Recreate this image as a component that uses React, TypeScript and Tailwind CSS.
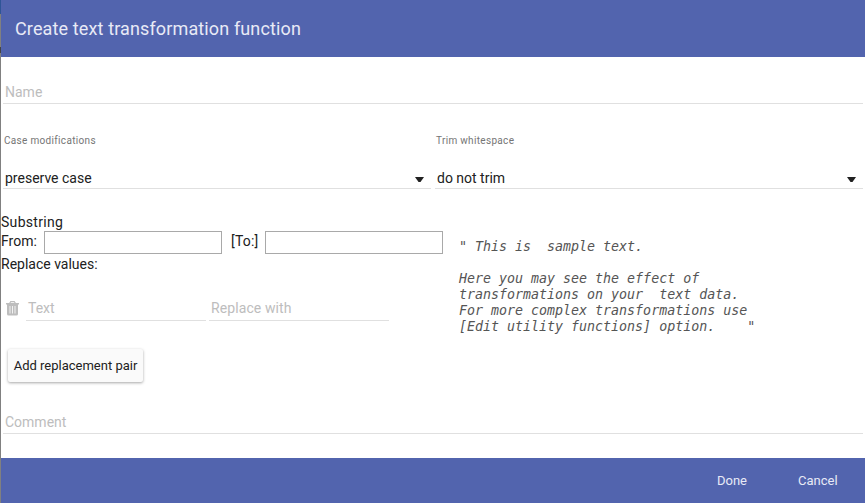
import React from 'react';

function Field({ label, className = '' }: { label: string; className?: string }) {
  return (
    <div className={`border-b border-[#e0e0e0] text-sm text-[#bdbdbd] ${className}`}>
      <span>{label}</span>
    </div>
  );
}

function Select({ label, value, className = '' }: { label: string; value: string; className?: string }) {
  return (
    <div className={className}>
      <div className="pl-[1px] text-[10px] leading-4 tracking-[0.32px] text-[#757575]">{label}</div>
      <div className="mt-[18px] flex h-[22px] items-center justify-between border-b border-[#e0e0e0] pt-px pr-[7px] pl-[2px] text-sm text-[#212121]">
        <span>{value}</span>
        <svg width="9" height="6" viewBox="0 0 9 6" className="mt-[3px]" aria-hidden="true">
          <path d="M0 0H9L5.5 5H3.5Z" fill="#212121" />
        </svg>
      </div>
    </div>
  );
}

function TrashIcon() {
  return (
    <svg width="13" height="15" viewBox="0 0 13 15" aria-hidden="true">
      <path d="M3.5 2.5L4.7 .6H8.3L9.5 2.5" fill="none" stroke="#bdbdbd" strokeWidth="1.2" />
      <path d="M0 2H13V3.4H12V13Q12 14.6 10.4 14.6H2.6Q1 14.6 1 13V3.4H0Z" fill="#bdbdbd" />
      <path d="M4 5V12.5M6.5 5V12.5M9 5V12.5" stroke="#fff" strokeWidth=".8" />
    </svg>
  );
}

export default function App() {
  return (
    <div className="flex h-[503px] w-[865px] overflow-hidden bg-white font-[Roboto,sans-serif] text-sm text-[#212121]">
      <div className="flex w-px shrink-0 flex-col bg-[#808080]">
        <div className="h-[14px] bg-[#2f5597]" />
        <div className="mt-[33px] h-[6px] bg-[#444444]" />
      </div>
      <div className="flex w-[864px] flex-col">
        <header className="flex h-[57px] shrink-0 items-center bg-[#5264ae] pl-[14px] text-[18px] tracking-[0.13px] text-[#e8eaf6]">
          <h1>Create text transformation function</h1>
        </header>
        <main className="flex h-[401px] flex-col">
          <Field label="Name" className="mt-6 mr-[2px] ml-[2px] h-[23px] pl-[2px] leading-[23px]" />
          <div className="mt-[29px] ml-[2px] flex gap-1">
            <Select label="Case modifications" value="preserve case" className="w-[428px]" />
            <Select label="Trim whitespace" value="do not trim" className="w-[428px]" />
          </div>
          <div className="flex">
            <section className="w-[458px] pt-6">
              <div className="h-[18px] leading-[18px] tracking-[0.3px]">Substring</div>
              <div className="flex h-[23px]">
                <span className="w-[43px] leading-5">From:</span>
                <div className="h-[23px] w-[178px] border border-[#a9a9a9]" />
                <span className="w-[43px] pl-[9px] leading-5 tracking-[0.2px]">[To:]</span>
                <div className="h-[23px] w-[178px] border border-[#a9a9a9]" />
              </div>
              <div className="mt-[2px] leading-4">Replace values:</div>
              <div className="mt-[25px] flex h-[24px] pl-[5px]">
                <div className="w-5 pt-[4px]"><TrashIcon /></div>
                <Field label="Text" className="w-[180px] pl-[2px] leading-[22px]" />
                <Field label="Replace with" className="ml-[3px] w-[180px] pl-[2px] leading-[22px] tracking-[0.1px]" />
              </div>
              <button className="mt-[28px] ml-[7px] h-[33px] w-[135px] rounded-[2px] bg-[#fafafa] pt-px text-[13px] whitespace-pre shadow-[0_1px_3px_rgba(0,0,0,0.35)]">
                Add replacement pair
              </button>
            </section>
            <pre className="mt-[50px] font-['DejaVu_Sans_Mono',monospace] text-[13.3px] leading-4 text-[#555555] italic">
              {'" This is  sample text.\n\nHere you may see the effect of\ntransformations on your  text data.\nFor more complex transformations use\n[Edit utility functions] option.    "'}
            </pre>
          </div>
          <Field label="Comment" className="mt-[29px] mr-[2px] ml-[2px] h-[23px] pl-[2px] leading-[22px]" />
        </main>
        <footer className="flex h-[45px] items-center bg-[#5264ae] pt-[2px] text-[13px] text-[#e8eaf6]">
          <button className="ml-[716px]">Done</button>
          <button className="ml-[51px]">Cancel</button>
        </footer>
      </div>
    </div>
  );
}
